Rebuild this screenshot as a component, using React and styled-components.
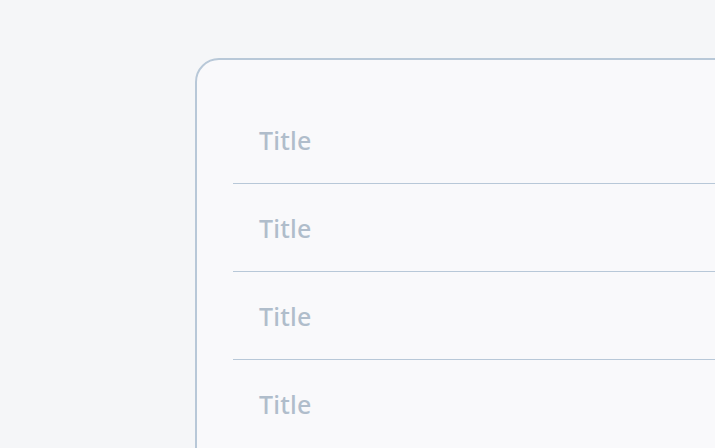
import React from 'react'
import styled, { createGlobalStyle } from 'styled-components'

const GlobalStyle = createGlobalStyle`
  html, body {
    margin: 0;
    padding: 0;
    background: #f5f6f8;
    overflow: hidden;
  }
`

const Page = styled.div`
  width: 715px;
  height: 448px;
  padding: 58px 0 0 195px;
  box-sizing: border-box;
  overflow: hidden;
`

const Card = styled.div`
  width: 600px;
  height: 500px;
  box-sizing: border-box;
  background: #f9f9fb;
  border: 2px solid #b8c8d8;
  border-radius: 24px;
  padding: 36px 0 0 36px;
`

const List = styled.ul`
  list-style: none;
  margin: 0;
  padding: 0;
`

const Row = styled.li`
  height: 87px;
  display: flex;
  align-items: center;
  padding-left: 26px;
  border-bottom: ${({ $last }) => ($last ? 'none' : '1.5px solid #b8c8d8')};
  font-family: "Noto Sans", sans-serif;
  font-size: 25px;
  font-weight: 500;
  letter-spacing: 0.2px;
  color: #b0bdcb;
`

export default function App() {
  const rows = ['Title', 'Title', 'Title', 'Title']
  return (
    <>
      <GlobalStyle />
      <Page>
        <Card>
          <List>
            {rows.map((t, i) => (
              <Row key={i} $last={i === rows.length - 1}>{t}</Row>
            ))}
          </List>
        </Card>
      </Page>
    </>
  )
}
